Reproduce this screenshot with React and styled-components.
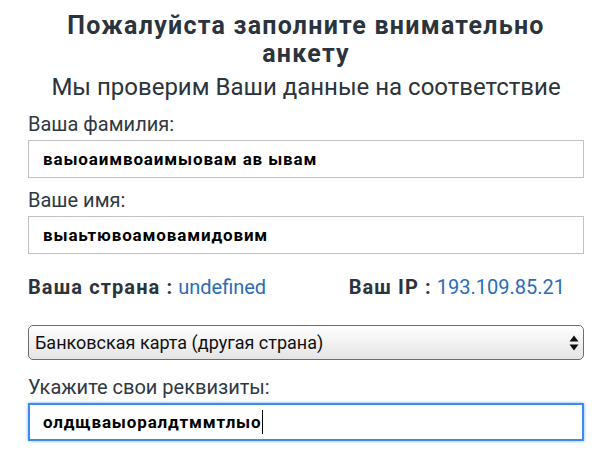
import React from 'react';
import styled, { createGlobalStyle } from 'styled-components';

const GlobalStyle = createGlobalStyle`
  html, body {
    margin: 0;
    padding: 0;
    background: #fff;
  }
  body {
    font-family: Roboto, "Noto Sans", "Liberation Sans", sans-serif;
  }
`;

const Page = styled.div`
  width: 608px;
  box-sizing: border-box;
  padding: 12px 24px 20px 28px;
  color: #2c3540;
`;

const Title = styled.h2`
  margin: 0;
  text-align: center;
  font-size: 25px;
  font-weight: 700;
  letter-spacing: 0.05em;
  line-height: 28px;
  color: #2b333d;
`;

const Subtitle = styled.p`
  margin: 5px 0 0;
  text-align: center;
  font-size: 24px;
  line-height: 28px;
  color: #2b333d;
`;

const Form = styled.form`
  margin-top: 11px;
  display: flex;
  flex-direction: column;
`;

const Label = styled.label`
  display: block;
  font-size: 20px;
  line-height: 24px;
  margin-bottom: 4px;
  color: #2f3843;
`;

const Field = styled.div`
  height: 38px;
  box-sizing: border-box;
  display: flex;
  align-items: center;
  margin-bottom: ${p => (p.$last ? '0' : '10px')};
  border: ${p => (p.$focused ? '2px solid #3d8ceb' : '1px solid #c2c2c2')};
  padding: 0 ${p => (p.$focused ? '13px' : '14px')};
  box-shadow: ${p => (p.$focused ? '0 0 3px rgba(61, 140, 235, 0.7)' : 'none')};
  font-size: 17px;
  font-weight: 700;
  letter-spacing: 0.05em;
  color: #000;
  white-space: nowrap;
`;

const Caret = styled.span`
  display: inline-block;
  width: 1px;
  height: 24px;
  margin-left: 0;
  background: #000;
`;

const InfoRow = styled.div`
  display: flex;
  justify-content: space-between;
  padding-right: 19px;
  margin: 11px 0 26px;
  font-size: 20px;
  line-height: 24px;
`;

const Info = styled.div`
  white-space: nowrap;
`;

const Key = styled.span`
  font-weight: 700;
  letter-spacing: 0.055em;
  color: #2b333d;
`;

const Value = styled.span`
  color: #2a6cb9;
`;

const SelectWrap = styled.div`
  position: relative;
  margin-bottom: 15px;
`;

const Select = styled.select`
  appearance: none;
  -webkit-appearance: none;
  width: 100%;
  height: 35px;
  box-sizing: border-box;
  border: 1px solid #6d6d6d;
  border-radius: 5px;
  padding: 0 30px 0 6px;
  background: linear-gradient(#ffffff, #e4e4e4);
  font-family: Roboto, "Noto Sans", sans-serif;
  font-size: 18px;
  color: #111;
`;

const Arrows = styled.svg`
  position: absolute;
  right: 5px;
  top: 50%;
  transform: translateY(-50%);
  pointer-events: none;
`;

export default function App() {
  return (
    <>
      <GlobalStyle />
      <Page>
        <Title>Пожалуйста заполните внимательно анкету</Title>
        <Subtitle>Мы проверим Ваши данные на соответствие</Subtitle>
        <Form onSubmit={e => e.preventDefault()}>
          <Label>Ваша фамилия:</Label>
          <Field>ваыоаимвоаимыовам ав ывам</Field>
          <Label>Ваше имя:</Label>
          <Field>выаьтювоамовамидовим</Field>

          <InfoRow>
            <Info>
              <Key>Ваша страна :</Key> <Value>undefined</Value>
            </Info>
            <Info>
              <Key>Ваш IP :</Key> <Value>193.109.85.21</Value>
            </Info>
          </InfoRow>

          <SelectWrap>
            <Select defaultValue="card-other">
              <option value="card-other">Банковская карта (другая страна)</option>
            </Select>
            <Arrows width="10" height="17" viewBox="0 0 10 17">
              <path d="M5 1 L9.5 7 L0.5 7 Z" fill="#111" />
              <path d="M5 16 L9.5 10 L0.5 10 Z" fill="#111" />
            </Arrows>
          </SelectWrap>

          <Label>Укажите свои реквизиты:</Label>
          <Field $focused $last>
            олдщваыоралдтммтлыо
            <Caret />
          </Field>
        </Form>
      </Page>
    </>
  );
}
